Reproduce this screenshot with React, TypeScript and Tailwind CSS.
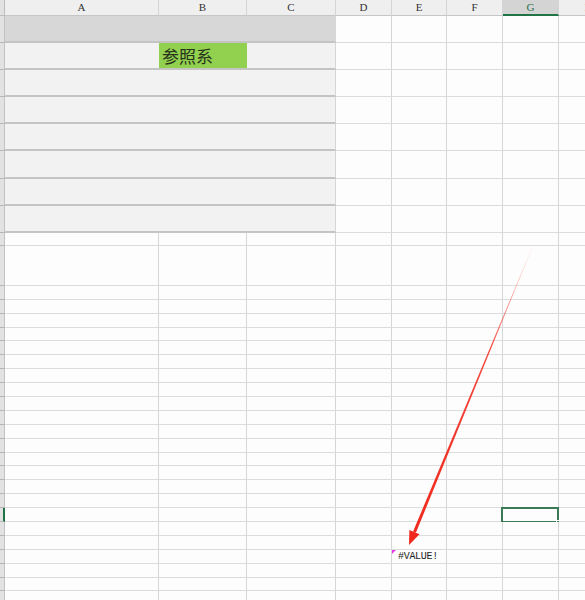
import clsx from "clsx";

type Col = { key: string; width: string };

// column widths include the 1px right grid line
const COLS: Col[] = [
  { key: "A", width: "w-[154px]" },
  { key: "B", width: "w-[88px]" },
  { key: "C", width: "w-[89px]" },
  { key: "D", width: "w-[56px]" },
  { key: "E", width: "w-[55px]" },
  { key: "F", width: "w-[56px]" },
  { key: "G", width: "w-[56px]" },
  { key: "H", width: "w-[60px]" },
];

// row heights include the bottom grid line
const ROW_HEIGHTS = [
  27, 27, 27, 27, 27, 28, 27, 27, 13, 40, 14, 14, 14, 13, 14, 14, 14, 14, 14, 14, 14, 14, 13, 14,
  14, 14, 14, 14, 14, 14, 14, 13, 14,
];

const BANDED_ROWS = 8;
const ACTIVE_ROW = 26;
const ERROR_ROW = 29;

const HeaderRow = () => (
  <div className="flex h-[16px]">
    <div className="w-[5px] shrink-0 bg-[#e2e2e2] border-r border-b border-[#bdbdbd]" />
    {COLS.map((c) => (
      <div
        key={c.key}
        className={clsx(
          c.width,
          "shrink-0 flex items-center justify-center text-[11px] leading-none border-r border-r-[#d4d4d4]",
          c.key === "G"
            ? "bg-[#d4d4d4] text-[#217346] border-b-2 border-b-[#217346]"
            : "bg-[#efefef] text-[#333] border-b border-b-[#c6c6c6]"
        )}
        style={{ fontFamily: '"Liberation Serif", serif' }}
      >
        {c.key}
      </div>
    ))}
  </div>
);

const Cell = ({ row, col, idx }: { row: number; col: Col; idx: number }) => {
  const banded = row < BANDED_ROWS && idx < 3;
  const green = row === 1 && col.key === "B";
  const error = row === ERROR_ROW && col.key === "E";
  return (
    <div
      className={clsx(
        col.width,
        "shrink-0 relative flex items-center",
        banded
          ? "border-b-2 border-b-[#c4c4c4]"
          : "border-b border-b-[#dcdcdc]",
        banded && idx < 2 ? "" : "border-r border-r-[#d6d6d6]",
        green
          ? "bg-[#92d050] pl-[3px]"
          : banded
            ? row === 0
              ? "bg-[#d7d7d7]"
              : "bg-[#f2f2f2]"
            : "bg-[#fdfdfd]",
        error && "pl-[6px]"
      )}
    >
      {green && (
        <span
          className="text-[17px] leading-[20px] text-[#26321a]"
          style={{ fontFamily: '"Noto Sans CJK SC", sans-serif' }}
        >
          参照系
        </span>
      )}
      {row === ACTIVE_ROW && col.key === "G" && (
        <div className="absolute -left-[2px] -top-[1px] w-[58px] h-[16px] border-2 border-[#3b7a57]">
          <div className="absolute -right-[3px] -bottom-[3px] w-[4px] h-[4px] bg-[#3b7a57] border border-white" />
        </div>
      )}
      {error && (
        <>
          {/* error marker in the corner */}
          <div className="absolute left-0 top-0 w-0 h-0 border-t-[4px] border-t-[#e83be8] border-r-[4px] border-r-transparent" />
          <span
            className="text-[10px] leading-[11px] text-[#222] tracking-[-0.3px]"
            style={{ fontFamily: '"Liberation Mono", monospace' }}
          >
            #VALUE!
          </span>
        </>
      )}
    </div>
  );
};

const Arrow = () => (
  <svg className="absolute left-0 top-0 pointer-events-none" width={585} height={600}>
    <defs>
      <linearGradient id="shaft" x1="532" y1="248" x2="412" y2="540" gradientUnits="userSpaceOnUse">
        <stop offset="0" stopColor="#ff3b30" stopOpacity="0.1" />
        <stop offset="0.35" stopColor="#f0281c" stopOpacity="0.85" />
        <stop offset="1" stopColor="#f0281c" />
      </linearGradient>
    </defs>
    <polygon points="532.2,248 531.8,248 413.1,531.5 415.9,532.7" fill="url(#shaft)" />
    <polygon points="409,545 419.5,534.2 409.4,530" fill="#f0281c" />
  </svg>
);

export default function App() {
  return (
    <div className="relative w-[585px] h-[600px] overflow-hidden bg-white">
      <HeaderRow />
      {ROW_HEIGHTS.map((h, r) => (
        <div key={r} className="flex" style={{ height: h }}>
          <div
            className={clsx(
              "w-[5px] shrink-0 bg-[#e2e2e2] border-b border-b-[#b5b5b5]",
              r === ACTIVE_ROW ? "border-r-2 border-r-[#217346]" : "border-r border-r-[#c2c2c2]"
            )}
          />
          {COLS.map((c, i) => (
            <Cell key={c.key} row={r} col={c} idx={i} />
          ))}
        </div>
      ))}
      <Arrow />
    </div>
  );
}
